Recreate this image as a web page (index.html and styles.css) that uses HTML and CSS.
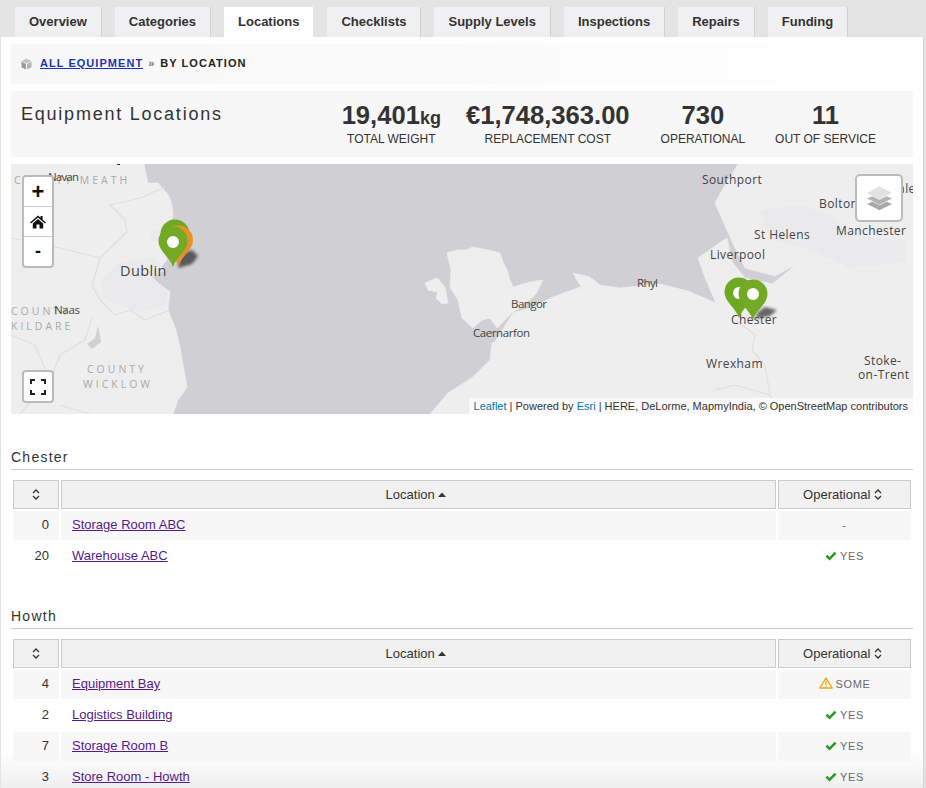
FILE: index.html
```html
<!DOCTYPE html>
<html lang="en">
<head>
  <meta charset="UTF-8">
  <title>Equipment Locations</title>
  <link rel="stylesheet" href="styles.css">
</head>
<body>

  <!-- Tabs -->
  <nav class="tabs">
    <a class="tab" href="#">Overview</a>
    <a class="tab" href="#">Categories</a>
    <a class="tab active" href="#">Locations</a>
    <a class="tab" href="#">Checklists</a>
    <a class="tab" href="#">Supply Levels</a>
    <a class="tab" href="#">Inspections</a>
    <a class="tab" href="#">Repairs</a>
    <a class="tab" href="#">Funding</a>
  </nav>

  <div class="panel">

    <!-- Breadcrumb -->
    <div class="breadcrumb">
      <svg class="crumb-icon" width="11" height="12" viewBox="0 0 11 12">
        <path d="M5.5 0.5 L10.5 3 L5.5 5.5 L0.5 3Z" fill="#c4c4c4"/>
        <path d="M0.5 3.6 L5 5.9 V11.5 L0.5 9.2Z" fill="#9a9a9a"/>
        <path d="M10.5 3.6 L6 5.9 V11.5 L10.5 9.2Z" fill="#b4b4b4"/>
      </svg>
      <a class="crumb-link" href="#">All Equipment</a>
      <span class="crumb-sep">»</span>
      <span class="crumb-current">By Location</span>
    </div>

    <!-- Title and totals -->
    <div class="summary">
      <h1>Equipment Locations</h1>
      <div class="stats">
        <div class="stat stat-first">
          <div class="stat-value">19,401<small>kg</small></div>
          <div class="stat-label">TOTAL WEIGHT</div>
        </div>
        <div class="stat stat-second">
          <div class="stat-value">€1,748,363.00</div>
          <div class="stat-label">REPLACEMENT COST</div>
        </div>
        <div class="stat">
          <div class="stat-value">730</div>
          <div class="stat-label">OPERATIONAL</div>
        </div>
        <div class="stat">
          <div class="stat-value">11</div>
          <div class="stat-label">OUT OF SERVICE</div>
        </div>
      </div>
    </div>

    <!-- Map -->
    <div class="map">
      <svg class="map-canvas" width="902" height="250" viewBox="11 164 902 250">
        <defs>
          <filter id="soft"><feGaussianBlur stdDeviation="1.6"/></filter>
          <path id="pin" d="M0 0 C-3 -10 -14.5 -16 -14.5 -26 A14.5 14.5 0 1 1 14.5 -26 C14.5 -16 3 -10 0 0Z"/>
        </defs>
        <rect x="11" y="164" width="902" height="250" fill="#cfcfd4"/>

        <!-- Ireland -->
        <path class="land" d="M11 164 H144 L146 174 L148 183 L158 183 L166 192 L170 198 L172 206 L173 217 L166 226 L160 235 L163 248 L167 260 L160 268 L152 277 L160 285 L170 292 L169 300 L168 310 L172 320 L176 330 L180 347 L182 360 L184 370 L187 387 L181 396 L178 400 L173 414 H11Z"/>
        <path class="urban" d="M120 262 L155 258 L165 270 L152 278 L168 290 L165 305 L140 312 L105 300 L100 280Z"/>
        <path class="urban" d="M150 232 L160 230 L162 240 L152 242Z"/>
        <path class="boundary" d="M165 187 L140 198 L110 205 L125 220 L127 232 L100 258 L60 248 L11 238"/>
        <path class="boundary" d="M100 258 L92 285 L100 300 L115 315 L130 310 L145 320 L170 310"/>
        <path class="boundary" d="M92 318 L85 340 L60 355 L50 380 L20 414"/>
        <path class="boundary" d="M11 335 L35 345 L50 380"/>
        <path class="boundary" d="M60 405 L90 414"/>
        <path class="lake" d="M98 326 L101 342 L92 349 L87 344 L95 338Z"/>

        <!-- Anglesey -->
        <path class="land" d="M447 253 L458 250 L466 250 L473 247 L488 250 L500 253 L503 262 L507 270 L510 280 L513 287 L530 282 L543 280 L537 292 L533 297 L520 308 L513 312 L497 328 L490 318 L482 320 L473 328 L462 318 L458 300 L450 287 L451 270Z"/>
        <path class="land" d="M425 283 L437 278 L445 287 L448 303 L442 304 L436 298 L438 292 L428 290Z"/>

        <!-- Wales and England -->
        <path class="land" d="M430 414 L448 393 L473 377 L490 360 L492 343 L495 342 L513 313 L533 307 L553 297 L580 287 L587 297 L573 273 L590 277 L600 285 L620 288 L660 284 L688 291 L716 303 L706 280 L698 258 L718 244 L727 238 L732 262 L745 278 L772 284 L797 264 L775 276 L745 268 L736 250 L727 230 L715 203 L725 185 L738 164 H913 V414Z"/>
        <path class="urban" d="M760 210 L800 205 L830 215 L850 235 L905 240 L905 262 L850 268 L810 250 L770 240Z"/>
        <path class="boundary" d="M735 320 L755 335 L752 350 L765 365 L770 395 L783 414"/>
        <path class="boundary" d="M715 390 L735 385 L770 395"/>

        <text class="county" x="14" y="184">COUNTY MEATH</text>
        <text class="county" x="11" y="315">COUNTY</text>
        <text class="county" x="11" y="330">KILDARE</text>
        <text class="county" x="87" y="373">COUNTY</text>
        <text class="county" x="83" y="388">WICKLOW</text>

        <text class="place small" x="48" y="181" textLength="31">Navan</text>
        <text class="place small" x="54" y="314" textLength="26">Naas</text>
        <text class="place big" x="120" y="276">Dublin</text>
        <text class="place small" x="511" y="308" textLength="36">Bangor</text>
        <text class="place small" x="473" y="337" textLength="57">Caernarfon</text>
        <text class="place small" x="637" y="287" textLength="21">Rhyl</text>
        <text class="place" x="702" y="184">Southport</text>
        <text class="place" x="819" y="208">Bolton</text>
        <text class="place" x="836" y="235">Manchester</text>
        <text class="place" x="754" y="239">St Helens</text>
        <text class="place" x="710" y="259">Liverpool</text>
        <text class="place" x="731" y="324">Chester</text>
        <text class="place" x="706" y="368">Wrexham</text>
        <text class="place" x="864" y="365">Stoke-</text>
        <text class="place" x="858" y="379">on-Trent</text>
        <text class="place" x="861" y="193">Rochdale</text>
        <rect x="117" y="164" width="3" height="1" fill="#333"/>

        <!-- Pin shadows -->
        <path d="M178 268 L192 264 L198 256 L192 250 L180 254Z" fill="#444" opacity=".85" filter="url(#soft)"/>
        <path d="M755 319 L770 316 L777 310 L765 307 L758 312Z" fill="#444" opacity=".8" filter="url(#soft)"/>

        <!-- Dublin pins -->
        <use href="#pin" x="175" y="260" fill="#6fa822"/>
        <use href="#pin" x="178.5" y="266" fill="#ea8f2a"/>
        <use href="#pin" x="173" y="267" fill="#72a925"/>
        <circle cx="173" cy="242" r="6" fill="#fff"/>

        <!-- Chester pins -->
        <use href="#pin" x="739" y="318" fill="#6fa822"/>
        <circle cx="739" cy="293" r="6" fill="#fff"/>
        <use href="#pin" x="753" y="320" fill="#72a925"/>
        <circle cx="753" cy="294" r="6" fill="#fff"/>
      </svg>

      <div class="zoom-bar">
        <a class="zoom-btn" href="#">+</a>
        <a class="zoom-btn" href="#">
          <svg width="16" height="14" viewBox="0 0 16 14">
            <path d="M8 0.5 L10.6 2.8 V1 H12.6 V4.5 L16 7.5 L15 8.5 L8 2.6 L1 8.5 L0 7.5Z" fill="#111"/>
            <path d="M2.8 8.4 L8 4 L13.2 8.4 V13.5 H9.5 V9.6 H6.5 V13.5 H2.8Z" fill="#111"/>
          </svg>
        </a>
        <a class="zoom-btn minus" href="#">-</a>
      </div>

      <a class="fullscreen-btn" href="#">
        <svg width="16" height="16" viewBox="0 0 16 16" fill="none" stroke="#222" stroke-width="2">
          <path d="M1 5 V1 H5 M11 1 H15 V5 M15 11 V15 H11 M5 15 H1 V11"/>
        </svg>
      </a>

      <a class="layers-btn" href="#">
        <svg width="27" height="26" viewBox="0 0 27 26">
          <path d="M13.5 13 L26.5 19 L13.5 25.5 L0.5 19Z" fill="#a8a8a8" stroke="#fff" stroke-width=".6"/>
          <path d="M13.5 7.5 L26.5 13.5 L13.5 20 L0.5 13.5Z" fill="#b4b4b4" stroke="#fff" stroke-width=".6"/>
          <path d="M13.5 1 L26.5 8 L13.5 14.5 L0.5 8Z" fill="#e2e2e2" stroke="#fff" stroke-width=".6"/>
        </svg>
      </a>

      <div class="attribution">
        <a href="#">Leaflet</a> | Powered by <a href="#">Esri</a> | HERE, DeLorme, MapmyIndia, © OpenStreetMap contributors
      </div>
    </div>

    <!-- Chester -->
    <section class="site">
      <h3>Chester</h3>
      <table class="site-table">
        <colgroup><col class="col-qty"><col><col class="col-op"></colgroup>
        <thead>
          <tr>
            <th><svg class="sort" width="8" height="11" viewBox="0 0 8 11"><path d="M1 4 L4 1 L7 4 M1 7 L4 10 L7 7"/></svg></th>
            <th>Location <svg class="caret" width="8" height="5" viewBox="0 0 8 5"><path d="M0 5 L4 0.5 L8 5Z"/></svg></th>
            <th>Operational <svg class="sort sort-end" width="8" height="11" viewBox="0 0 8 11"><path d="M1 4 L4 1 L7 4 M1 7 L4 10 L7 7"/></svg></th>
          </tr>
        </thead>
        <tbody>
          <tr>
            <td class="qty">0</td>
            <td class="name"><a href="#">Storage Room ABC</a></td>
            <td class="op">-</td>
          </tr>
          <tr>
            <td class="qty">20</td>
            <td class="name"><a href="#">Warehouse ABC</a></td>
            <td class="op"><svg class="status" width="12" height="10" viewBox="0 0 12 10"><path d="M0.5 5.5 L2.3 3.7 L4.5 5.9 L9.7 0.7 L11.5 2.5 L4.5 9.5Z" fill="#279a27"/></svg>YES</td>
          </tr>
        </tbody>
      </table>
    </section>

    <!-- Howth -->
    <section class="site">
      <h3>Howth</h3>
      <table class="site-table">
        <colgroup><col class="col-qty"><col><col class="col-op"></colgroup>
        <thead>
          <tr>
            <th><svg class="sort" width="8" height="11" viewBox="0 0 8 11"><path d="M1 4 L4 1 L7 4 M1 7 L4 10 L7 7"/></svg></th>
            <th>Location <svg class="caret" width="8" height="5" viewBox="0 0 8 5"><path d="M0 5 L4 0.5 L8 5Z"/></svg></th>
            <th>Operational <svg class="sort sort-end" width="8" height="11" viewBox="0 0 8 11"><path d="M1 4 L4 1 L7 4 M1 7 L4 10 L7 7"/></svg></th>
          </tr>
        </thead>
        <tbody>
          <tr>
            <td class="qty">4</td>
            <td class="name"><a href="#">Equipment Bay</a></td>
            <td class="op"><svg class="status" width="14" height="12" viewBox="0 0 14 12"><path d="M7 1.2 L13.2 11 H0.8Z" fill="none" stroke="#f3a712" stroke-width="1.4" stroke-linejoin="round"/><path d="M7 4.2 V8 M7 8.8 V10" stroke="#f3a712" stroke-width="1.3"/></svg>SOME</td>
          </tr>
          <tr>
            <td class="qty">2</td>
            <td class="name"><a href="#">Logistics Building</a></td>
            <td class="op"><svg class="status" width="12" height="10" viewBox="0 0 12 10"><path d="M0.5 5.5 L2.3 3.7 L4.5 5.9 L9.7 0.7 L11.5 2.5 L4.5 9.5Z" fill="#279a27"/></svg>YES</td>
          </tr>
          <tr>
            <td class="qty">7</td>
            <td class="name"><a href="#">Storage Room B</a></td>
            <td class="op"><svg class="status" width="12" height="10" viewBox="0 0 12 10"><path d="M0.5 5.5 L2.3 3.7 L4.5 5.9 L9.7 0.7 L11.5 2.5 L4.5 9.5Z" fill="#279a27"/></svg>YES</td>
          </tr>
          <tr>
            <td class="qty">3</td>
            <td class="name"><a href="#">Store Room - Howth</a></td>
            <td class="op"><svg class="status" width="12" height="10" viewBox="0 0 12 10"><path d="M0.5 5.5 L2.3 3.7 L4.5 5.9 L9.7 0.7 L11.5 2.5 L4.5 9.5Z" fill="#279a27"/></svg>YES</td>
          </tr>
        </tbody>
      </table>
    </section>

  </div>
</body>
</html>
```

FILE: styles.css
```css
html, body {
  height: 100%;
  overflow: hidden;
}

body {
  display: flex;
  flex-direction: column;
  margin: 0;
  font-family: "Liberation Sans", Arial, sans-serif;
  color: #333;
  background-color: #e4e4e4;
}

/* Tabs */
.tabs {
  display: flex;
  flex: none;
  gap: 14px;
  height: 30px;
  padding: 7px 0 0 15px;
}

.tab {
  display: flex;
  align-items: center;
  padding: 0 14px 2px;
  font-size: 13px;
  font-weight: bold;
  color: #333;
  text-decoration: none;
  background-color: #f0f0f2;
  box-shadow: 1px 0 0 #d0d0d0;
}

.tab.active {
  background-color: #fff;
  box-shadow: none;
}

/* Main panel */
.panel {
  flex: 1;
  min-height: 0;
  overflow: hidden;
  margin: 0 2px 0 1px;
  padding: 7px 10px;
  background: linear-gradient(to bottom, #fff calc(100% - 36px), #efefef) fixed;
  border-right: 1px solid #d4d4d4;
}

.breadcrumb {
  display: flex;
  align-items: center;
  box-sizing: border-box;
  height: 40px;
  padding: 0 0 2px 10px;
  font-size: 11px;
  font-weight: bold;
  letter-spacing: 1.04px;
  text-transform: uppercase;
  background: linear-gradient(to right, #f7f7f7, #fff);
}

.crumb-icon {
  margin: 2px 8px 0 0;
}

.crumb-link {
  color: #1b34b4;
}

.crumb-sep {
  margin: 0 6px 0 5px;
  color: #777;
  letter-spacing: 0;
}

.crumb-current {
  color: #222;
}

.summary {
  display: flex;
  justify-content: space-between;
  height: 66px;
  margin-top: 7px;
  padding: 0 22px 0 10px;
  background-color: #f7f7f7;
}

.summary h1 {
  margin: 13px 0 0;
  font-size: 18px;
  font-weight: normal;
  letter-spacing: 1.77px;
  line-height: 20px;
}

.stats {
  display: flex;
  padding-top: 10px;
}

.stat {
  padding: 0 15px;
  text-align: center;
}

.stat-first {
  padding-right: 10px;
}

.stat-second {
  padding-right: 16px;
}

.stat-value {
  height: 29px;
  font-size: 25.6px;
  font-weight: bold;
  line-height: 29px;
}

.stat-value small {
  font-size: 18px;
}

.stat-label {
  margin-top: 1px;
  font-size: 12px;
  line-height: 16px;
}

/* Map */
.map {
  position: relative;
  height: 250px;
  margin-top: 7px;
  overflow: hidden;
}

.map-canvas {
  display: block;
}

.land {
  fill: #eeeeef;
  stroke: #eeeeef;
  stroke-width: 0.8;
  stroke-linejoin: round;
}

.urban {
  fill: #eaeaec;
}

.boundary {
  fill: none;
  stroke: #dfdfe2;
  stroke-width: 1.2;
  stroke-linejoin: round;
}

.lake {
  fill: #cfcfd4;
}

.place {
  font-family: "Open Sans", sans-serif;
  font-size: 12px;
  letter-spacing: 0.4px;
  fill: #444;
}

.place.small {
  font-size: 11.5px;
  letter-spacing: 0;
}

.place.big {
  font-size: 14.5px;
  letter-spacing: 0.4px;
}

.county {
  font-family: "Open Sans", sans-serif;
  font-size: 10.5px;
  letter-spacing: 3px;
  fill: #aaa;
}

.zoom-bar {
  position: absolute;
  top: 11px;
  left: 11px;
  width: 28px;
  background-color: #fff;
  border: 2px solid #bbb;
  border-radius: 4px;
}

.zoom-btn {
  display: flex;
  align-items: center;
  justify-content: center;
  height: 29px;
  font-size: 22px;
  font-weight: bold;
  color: #111;
  text-decoration: none;
  border-bottom: 1px solid #ccc;
}

.zoom-btn.minus {
  font-size: 18px;
  border-bottom: none;
}

.fullscreen-btn {
  position: absolute;
  top: 206px;
  left: 11px;
  display: flex;
  align-items: center;
  justify-content: center;
  width: 28px;
  height: 29px;
  background-color: #fff;
  border: 2px solid #bbb;
  border-radius: 4px;
}

.layers-btn {
  position: absolute;
  top: 10px;
  left: 844px;
  display: flex;
  align-items: center;
  justify-content: center;
  width: 44px;
  height: 44px;
  background-color: #fff;
  border: 2px solid #bbb;
  border-radius: 5px;
}

.attribution {
  position: absolute;
  right: 0;
  bottom: 0;
  height: 16px;
  padding: 0 5px;
  font-size: 11px;
  line-height: 17px;
  color: #333;
  white-space: nowrap;
  background-color: rgba(255, 255, 255, 0.7);
}

.attribution a {
  color: #0078a8;
  text-decoration: none;
}

/* Location tables */
.site {
  margin-top: 35px;
}

.site h3 {
  margin: 0;
  padding-bottom: 4px;
  font-size: 14px;
  font-weight: normal;
  line-height: 16px;
  letter-spacing: 1.25px;
  border-bottom: 1px solid #ccc;
}

.site-table {
  width: 100%;
  margin-top: 8px;
  table-layout: fixed;
  border-collapse: separate;
  border-spacing: 2px;
  font-size: 13px;
}

.col-qty {
  width: 46px;
}

.col-op {
  width: 133px;
}

.site-table th {
  box-sizing: border-box;
  height: 29px;
  padding: 0;
  font-weight: normal;
  background-color: #f1f1f1;
  border: 1px solid #ccc;
}

.site-table td {
  box-sizing: border-box;
  height: 29px;
  padding: 0 0 2px;
}

.site-table tbody tr:nth-child(odd) td {
  background-color: #f7f7f7;
}

.sort {
  fill: none;
  stroke: #333;
  stroke-width: 1.3;
  vertical-align: -1px;
}

.sort-end {
  margin-right: 4px;
}

.caret {
  margin-right: 5px;
  fill: #333;
  vertical-align: 2px;
}

.qty {
  padding-right: 10px !important;
  text-align: right;
}

.name {
  padding-left: 11px !important;
}

.name a {
  color: #551a8b;
}

.op {
  font-size: 11px;
  letter-spacing: 0.6px;
  text-align: center;
  color: #6a6a6a;
}

.status {
  margin-right: 3px;
  vertical-align: -1px;
}
```
